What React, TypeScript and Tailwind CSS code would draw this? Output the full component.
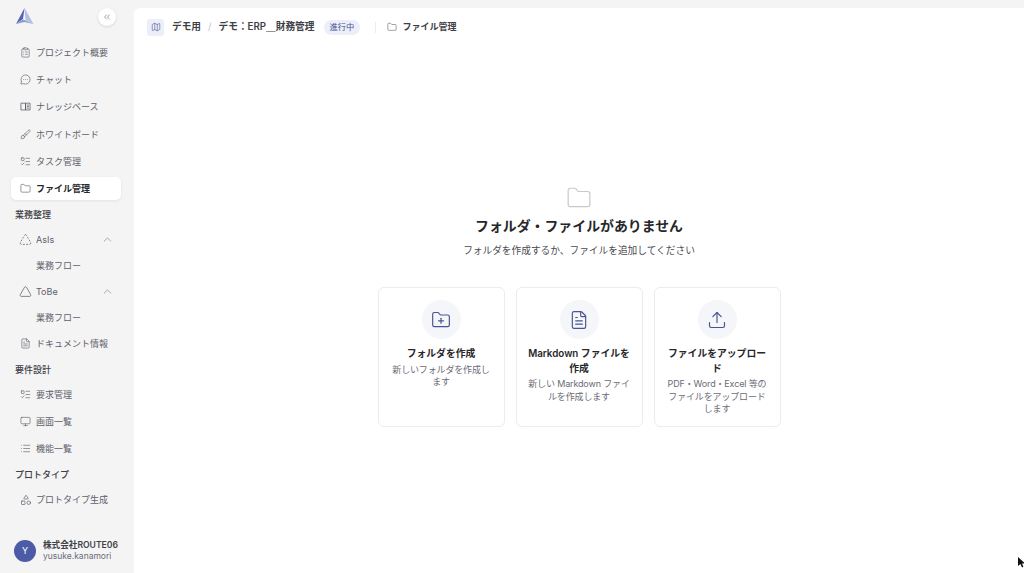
import React from "react";
import {
  ChevronsLeft, ClipboardList, MessageCircleMore, Brush, ListTodo, Folder,
  Triangle, TriangleDashed, ChevronUp, FileText, Monitor, List, Shapes, Map, FolderPlus, Upload,
} from "lucide-react";

const font = "font-['Inter','Noto_Sans_CJK_JP',sans-serif]";

function BookIcon({ size, className }: { size: number; strokeWidth?: number; className?: string }) {
  return (
    <svg width={size} height={size} viewBox="0 0 12 12" fill="none" stroke="currentColor" strokeWidth="0.8" className={className}>
      <path d="M6 2.4H1v7.4h5zM6 2.4h5v7.4H6z" />
      <path d="M7.4 4.4h2.3M7.4 6.1h2.3M7.4 7.8h2.3" />
    </svg>
  );
}

function Row({ icon: I, label, active, size = 11, chevron }: { icon: any; label: string; active?: boolean; size?: number; chevron?: boolean }) {
  return (
    <div className={`h-[23px] mb-[4.2px] ml-[11px] mr-[13px] flex items-center pl-[9px] pr-[7px] rounded-[5px] ${active ? "bg-white shadow-[0_1px_3px_rgba(0,0,0,0.08)] text-[#27272a] font-semibold" : "text-[#60606a]"}`}>
      <span className="w-[11px] flex justify-center">
        <I size={size} strokeWidth={1.3} className="shrink-0 text-[#55555f]" />
      </span>
      <span className="ml-[5px] text-[9px] leading-none flex-1">{label}</span>
      {chevron && <ChevronUp size={13} strokeWidth={1.1} className="text-[#70707a]" />}
    </div>
  );
}

function Sub({ label }: { label: string }) {
  return <div className="h-[20px] mb-[4.6px] pl-[36px] flex items-center text-[9px] text-[#60606a] leading-none">{label}</div>;
}

function Section({ label }: { label: string }) {
  return <div className="h-[20.5px] mb-[3.5px] pl-[15px] flex items-center text-[9px] font-medium text-[#3f3f46] leading-none">{label}</div>;
}

function Card({ icon: I, title, desc }: { icon: any; title: string; desc: string }) {
  return (
    <div className="w-[127px] h-[140px] rounded-[6px] border border-[#ececf0] bg-white flex flex-col items-center pt-[12px] px-[11px] text-center">
      <div className="w-[39px] h-[39px] rounded-full bg-[#f5f6fa] flex items-center justify-center mb-[8px]">
        <I size={20} strokeWidth={1.4} className="text-[#4a5490]" />
      </div>
      <div className="text-[9.8px] leading-[14.5px] font-semibold text-[#27272a]">{title}</div>
      <div className="text-[9px] leading-[12.5px] tracking-[-0.15px] text-[#6b6b75] mt-[2px]">{desc}</div>
    </div>
  );
}

export default function App() {
  return (
    <div className={`relative w-[1024px] h-[573px] overflow-hidden flex bg-[#f4f4f5] ${font}`}>
      <aside className="w-[134px] shrink-0 flex flex-col">
        <div className="h-[41px] flex items-center justify-between pl-[15px] pr-[18px] shrink-0 pb-[8px]">
          <svg width="19" height="17" viewBox="0 0 19 17">
            <path d="M9.5 0 L18.5 16 L10.5 12 Z" fill="#b4c0e2" />
            <path d="M9.5 0 L1 16 L8 11 Z" fill="#5363ad" />
            <path d="M1 16 L8 11.5 L10.5 12.5 L18.5 16 L9.5 14 Z" fill="#8b9ad2" />
          </svg>
          <button className="w-[18px] h-[18px] rounded-full bg-white shadow-[0_1px_3px_rgba(0,0,0,0.12)] flex items-center justify-center">
            <ChevronsLeft size={10} strokeWidth={1.4} className="text-[#60606a]" />
          </button>
        </div>
        <Row icon={ClipboardList} label="プロジェクト概要" />
        <Row icon={MessageCircleMore} label="チャット" />
        <Row icon={BookIcon} label="ナレッジベース" />
        <Row icon={Brush} label="ホワイトボード" />
        <Row icon={ListTodo} label="タスク管理" />
        <Row icon={Folder} label="ファイル管理" active />
        <Section label="業務整理" />
        <Row icon={TriangleDashed} label="AsIs" size={13} chevron />
        <Sub label="業務フロー" />
        <Row icon={Triangle} label="ToBe" size={13} chevron />
        <Sub label="業務フロー" />
        <Row icon={FileText} label="ドキュメント情報" />
        <Section label="要件設計" />
        <Row icon={ListTodo} label="要求管理" />
        <Row icon={Monitor} label="画面一覧" />
        <Row icon={List} label="機能一覧" />
        <Section label="プロトタイプ" />
        <Row icon={Shapes} label="プロトタイプ生成" size={12} />
        <div className="mt-auto h-[42px] flex items-center pl-[14px] pb-[2px]">
          <div className="w-[22px] h-[22px] rounded-full bg-[#4c5ba6] text-white text-[9px] flex items-center justify-center">Y</div>
          <div className="ml-[7px]">
            <div className="text-[8.6px] leading-[11px] font-semibold text-[#3f3f46]">株式会社ROUTE06</div>
            <div className="text-[8.5px] leading-[11px] text-[#6b6b75]">yusuke.kanamori</div>
          </div>
        </div>
      </aside>

      <main className="flex-1 mt-[8px] bg-white rounded-tl-[6px] flex flex-col">
        <header className="h-[38px] shrink-0 flex items-center pl-[13px] text-[9.7px] font-semibold text-[#3f3f46]">
          <div className="w-[17px] h-[17px] rounded-[3px] bg-[#eceefa] flex items-center justify-center">
            <Map size={10} strokeWidth={1.4} className="text-[#4a5490]" />
          </div>
          <span className="ml-[8px]">デモ用</span>
          <span className="mx-[7px] text-[#c4c4cc] font-normal">/</span>
          <span>デモ：ERP＿財務管理</span>
          <span className="ml-[9px] h-[15px] px-[6px] rounded-full bg-[#eceefa] text-[#4a5490] text-[8.3px] font-normal flex items-center">進行中</span>
          <span className="ml-[15px] w-px h-[11px] bg-[#ececf0]" />
          <Folder size={10} strokeWidth={1.3} className="ml-[11px] text-[#55555f]" />
          <span className="ml-[5px] text-[9px] font-semibold">ファイル管理</span>
        </header>
        <div className="flex-1 flex flex-col items-center pt-[139px]">
          <Folder size={26} strokeWidth={1.1} className="text-[#c8c8ce]" />
          <h1 className="mt-[5px] text-[13.9px] leading-[20px] font-semibold text-[#27272a]">フォルダ・ファイルがありません</h1>
          <p className="mt-[8px] text-[9.7px] leading-[14px] text-[#4a4a52]">フォルダを作成するか、ファイルを追加してください</p>
          <div className="mt-[29px] flex gap-[11px]">
            <Card icon={FolderPlus} title="フォルダを作成" desc="新しいフォルダを作成します" />
            <Card icon={FileText} title="Markdown ファイルを作成" desc="新しい Markdown ファイルを作成します" />
            <Card icon={Upload} title="ファイルをアップロード" desc="PDF・Word・Excel 等のファイルをアップロードします" />
          </div>
        </div>
      </main>

      <svg className="absolute left-[1018px] top-[557px]" width="8" height="11" viewBox="0 0 8 11">
        <path d="M0 0 L0 9 L2.4 7 L4 10.5 L5.4 9.8 L4 6.6 L7 6.4 Z" fill="#111" />
      </svg>
    </div>
  );
}
